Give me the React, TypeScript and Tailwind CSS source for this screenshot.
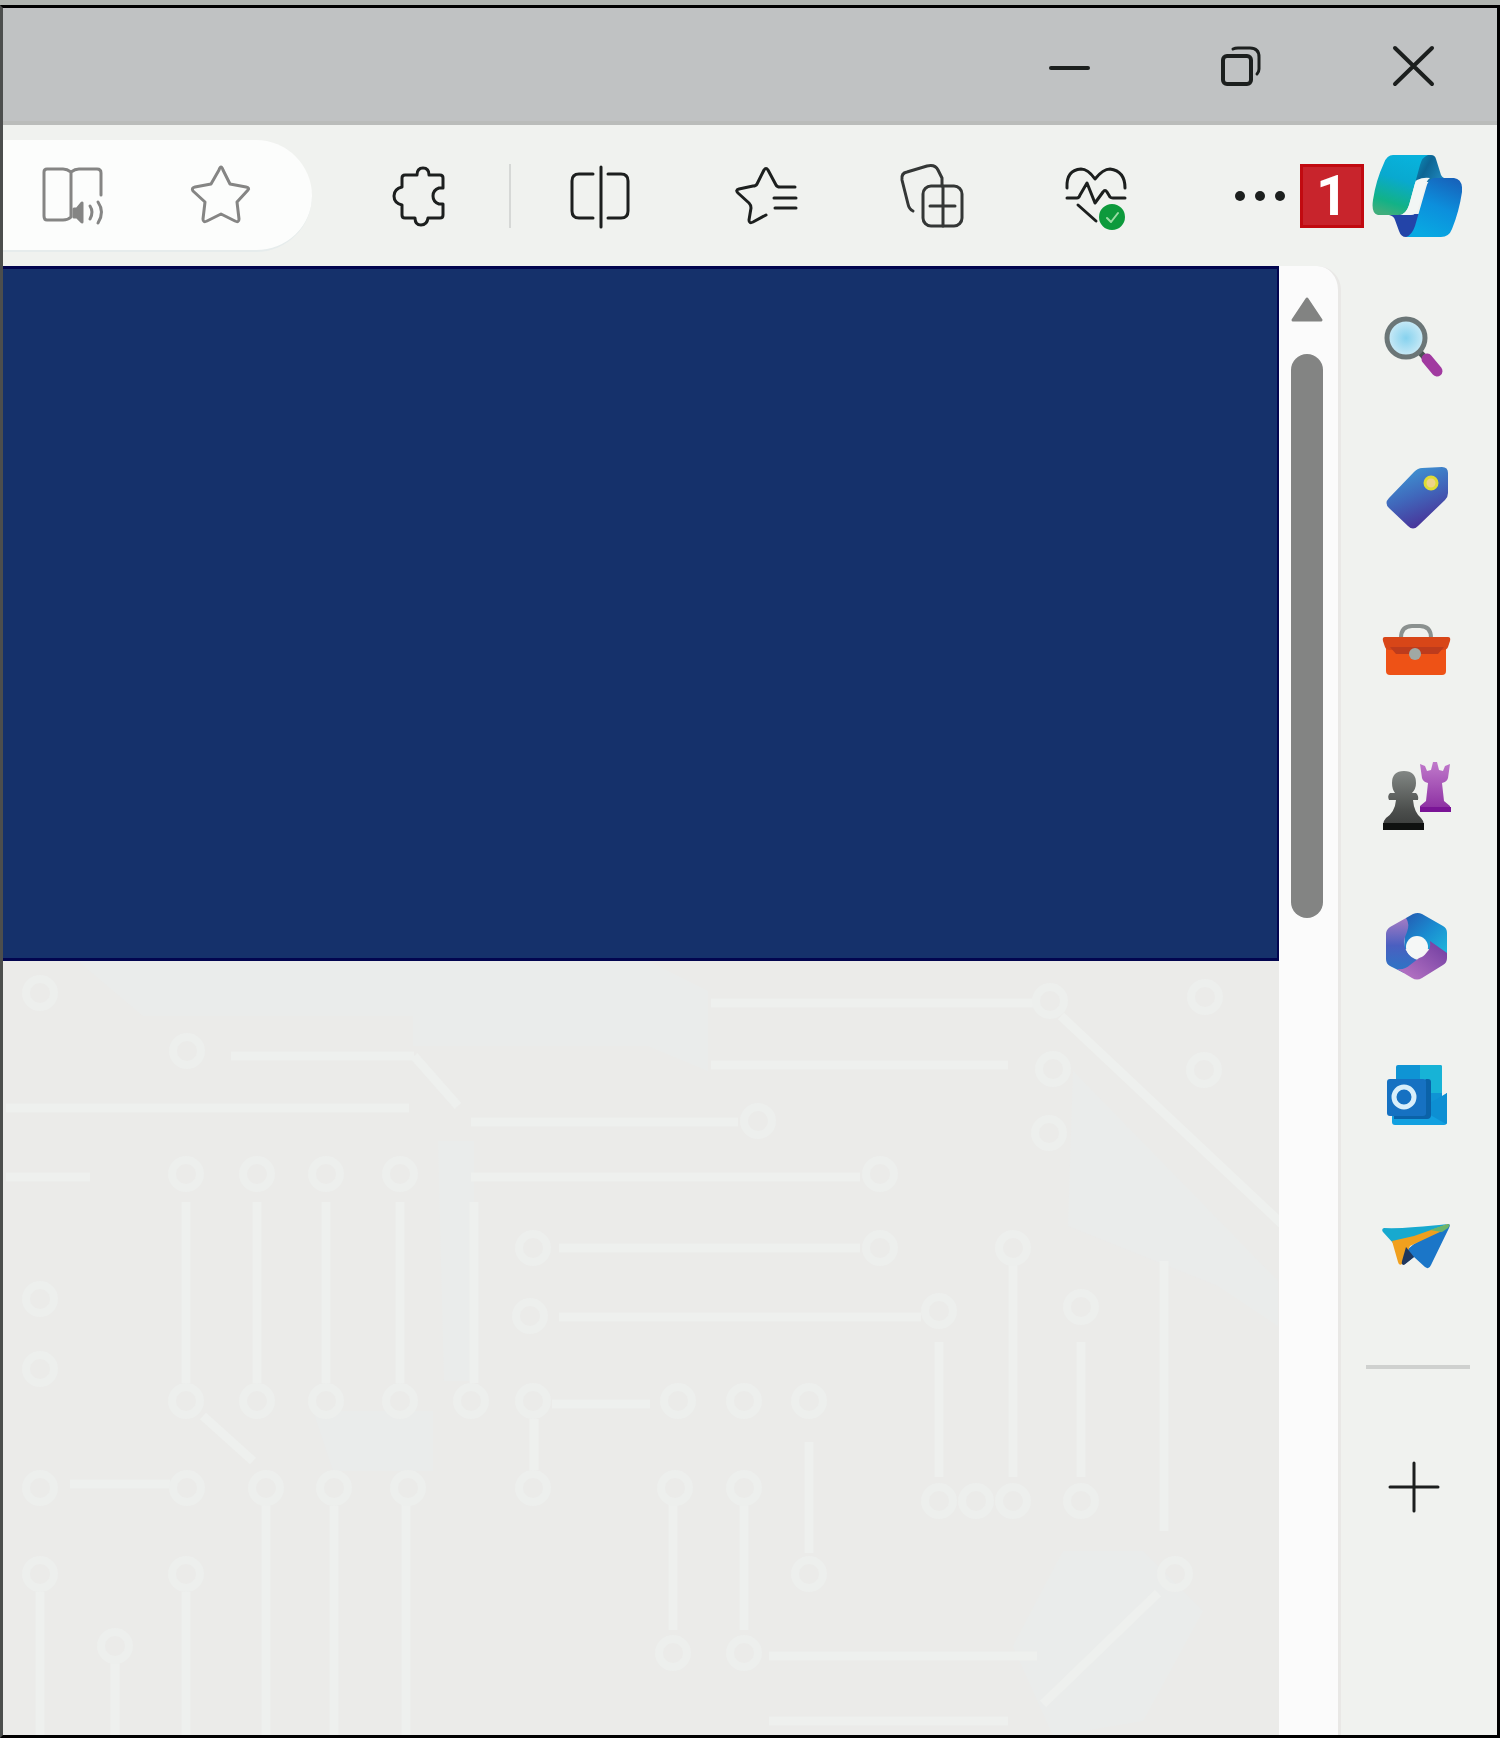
import type { ReactNode } from "react";

type IconProps = { children: ReactNode; className?: string };

function Icon({ children, className = "text-[#1c1f1e]" }: IconProps) {
  return (
    <svg
      viewBox="0 0 72 72"
      className={`w-18 h-18 ${className}`}
      fill="none"
      stroke="currentColor"
      strokeWidth="3"
      strokeLinecap="round"
      strokeLinejoin="round"
      aria-hidden="true"
    >
      {children}
    </svg>
  );
}

function IconButton({ label, children }: { label: string; children: ReactNode }) {
  return (
    <button type="button" aria-label={label} className="shrink-0 cursor-pointer">
      {children}
    </button>
  );
}

function TitleBar() {
  return (
    <header className="h-[117px] flex items-center justify-end gap-25 pr-12 bg-[#c0c2c3] border-b-4 border-[#babcba]">
      <IconButton label="Minimize">
        <Icon>
          <path d="M18 39h37" strokeWidth="4" />
        </Icon>
      </IconButton>
      <IconButton label="Restore">
        <Icon>
          <rect x="18" y="27" width="28" height="28" rx="4" strokeWidth="4" />
          <path d="M28 20q2-1 5-1h12q9 0 9 9v12q0 3-2 5" />
        </Icon>
      </IconButton>
      <IconButton label="Close">
        <Icon>
          <path d="M18 19l37 36M55 19L18 55" strokeWidth="4" />
        </Icon>
      </IconButton>
    </header>
  );
}

function CopilotLogo() {
  return (
    <svg viewBox="0 0 90 84" className="w-[90px] h-21" aria-hidden="true">
      <defs>
        <linearGradient id="cp-left" x1="0.6" y1="0" x2="0.3" y2="1">
          <stop offset="0" stopColor="#08b2dc" />
          <stop offset="0.4" stopColor="#09a9cf" />
          <stop offset="0.8" stopColor="#12b287" />
          <stop offset="1" stopColor="#3fae7c" />
        </linearGradient>
        <linearGradient id="cp-right" x1="0.8" y1="0" x2="0.4" y2="1">
          <stop offset="0" stopColor="#1763bb" />
          <stop offset="0.5" stopColor="#0c8fdc" />
          <stop offset="1" stopColor="#08a9e2" />
        </linearGradient>
        <linearGradient id="cp-fold" x1="0" y1="0" x2="1" y2="0.4">
          <stop offset="0" stopColor="#0a9dc8" />
          <stop offset="0.5" stopColor="#0d6594" />
          <stop offset="1" stopColor="#1f86bb" />
        </linearGradient>
      </defs>
      <path d="M48 1h11q4 0 5 4l5 16q2 4 8 4L56 28l-16-2z" fill="url(#cp-fold)" />
      <path d="M17 60h30l-5 23H34q-5 0-7-6l-4-11q-1-4-6-5z" fill="#2344a8" />
      <path
        d="M21 1h35q-6 2-8 10L38 48q-3 13-12 13H6Q-1 60 1 46 4 26 12 9q3-8 9-8z"
        fill="url(#cp-left)"
      />
      <path
        d="M62 24h20q9 1 8 14-3 20-10 37-3 8-11 8H34q6-2 9-11l11-38q2-9 8-10z"
        fill="url(#cp-right)"
      />
      <path d="M45 26q6-3 13-2-4 3-6 11l-6 20q-2 6-7 6H28q6-1 9-10l5-18q1-5 3-7z" fill="#f2f6f5" />
    </svg>
  );
}

function Toolbar() {
  return (
    <div className="h-[141px] flex items-center pr-[35px] bg-[#f0f2ef]">
      <div className="flex-1 h-28 flex items-center gap-[75px] pl-[35px] mr-18 bg-[#fcfdfc] rounded-r-full border-b-2 border-[#e6ecec]">
        <IconButton label="Read aloud">
          <Icon className="text-[#858584]">
            <path d="M33 13q-4-3-8-3H9q-3 0-3 3v44q0 4 3 4h16q5 0 8-3V13q4-3 8-3h18q4 0 4 4v22" />
            <path d="M36 50h3l5-6v19l-5-5h-3z" fill="currentColor" />
            <path d="M52 47q4 6 0 13M60 43q7 10 0 21" />
          </Icon>
        </IconButton>
        <IconButton label="Add to favorites">
          <Icon className="text-[#858584]">
            <path d="M36 8q1 0 2 3l7 14 16 3q4 1 2 3L52 43l2 17q0 4-4 2l-14-7-14 7q-4 2-4-2l2-17L8 32q-2-3 2-4l16-3 8-14q1-3 2-3z" />
          </Icon>
        </IconButton>
      </div>

      <nav aria-label="Browser tools" className="flex items-center">
        <IconButton label="Extensions">
          <Icon>
            <path d="M33 15q0-7 6-7t6 7h11q3 0 3 3v10h-4q-6 2-6 8t6 8h4v11q0 3-3 3H44q-1 7-7 7t-6-7H21q-3 0-3-3V45q-8-2-8-9t8-9v-9q0-3 3-3z" />
          </Icon>
        </IconButton>
        <span className="w-0.5 h-16 mx-[53px] bg-[#d6d8d6]" />
        <div className="flex items-center gap-[93px]">
          <IconButton label="Split screen">
            <Icon>
              <path d="M37 7v60M29 14H15q-7 0-7 7v30q0 7 7 7h14M44 14h13q7 0 7 7v30q0 7-7 7H44" />
            </Icon>
          </IconButton>
          <IconButton label="Favorites">
            <Icon>
              <path d="M66 27H51q-3 0-4-2l-8-15q-2-3-4 0l-7 14q-1 2-4 2l-14 3q-4 1-1 4l11 10q2 2 2 5l-2 12q0 4 4 2l13-7M45 38h22M46 48h21" />
            </Icon>
          </IconButton>
          <IconButton label="Collections">
            <Icon className="text-[#343736]">
              <rect x="29" y="26" width="39" height="40" rx="8" />
              <path d="M49 26v40M36 46h25M19 51q-4-2-5-7L8 20q-1-7 5-8l20-6q8-2 11 4l4 8v8" />
            </Icon>
          </IconButton>
          <IconButton label="Browser essentials">
            <Icon>
              <path d="M8 28Q7 10 22 9q7 0 14 10Q44 9 51 9q15 2 15 19M8 38h10q2 0 3-3l7-12 8 20 8-11q2-3 4 0l3 5q1 1 3 1h12M19 45l18 16" />
              <circle cx="53" cy="57" r="12" fill="#0d9a3c" stroke="#0d9a3c" strokeWidth="2" />
              <path d="M48 58l4 4 7-9" stroke="#9adca4" strokeWidth="2" />
            </Icon>
          </IconButton>
          <IconButton label="Settings and more">
            <Icon>
              <g fill="currentColor" stroke="none">
                <circle cx="16" cy="36" r="5" />
                <circle cx="36" cy="36" r="5" />
                <circle cx="56" cy="36" r="5" />
              </g>
            </Icon>
          </IconButton>
        </div>
        <span className="w-16 h-16 ml-1 mr-2 flex items-center justify-center bg-[#c8242c] border-3 border-[#c10a10] font-[family-name:Roboto,sans-serif] text-[56px] leading-none font-bold text-white">
          1
        </span>
        <IconButton label="Copilot">
          <CopilotLogo />
        </IconButton>
      </nav>
    </div>
  );
}

// [x1, y1, x2, y2]
const TRACES = [
  [228, 95, 411, 95], [3, 147, 406, 147], [468, 161, 735, 161], [3, 216, 87, 216],
  [468, 216, 857, 216], [556, 287, 857, 287], [556, 356, 918, 356], [549, 443, 647, 443],
  [67, 523, 167, 523], [708, 42, 1034, 42], [708, 104, 1005, 104], [766, 695, 1034, 695],
  [766, 760, 1005, 760], [183, 241, 183, 422], [254, 241, 254, 422], [323, 241, 323, 422],
  [397, 241, 397, 422], [471, 241, 471, 422], [531, 458, 531, 509], [263, 539, 263, 774],
  [331, 545, 331, 774], [403, 539, 403, 774], [37, 631, 37, 774], [183, 631, 183, 774],
  [112, 702, 112, 774], [936, 381, 936, 516], [1010, 300, 1010, 516], [1078, 381, 1078, 516],
  [1161, 300, 1161, 570], [806, 481, 806, 592], [670, 542, 670, 669], [741, 542, 741, 669],
  [1058, 55, 1280, 264], [1155, 632, 1040, 743], [411, 95, 455, 145], [200, 455, 250, 500],
];

const PADS = [
  [37, 32], [184, 90], [755, 160], [877, 213], [530, 287], [877, 287], [527, 355],
  [183, 213], [254, 213], [323, 213], [397, 213], [183, 440], [254, 440], [323, 440],
  [397, 440], [468, 440], [530, 440], [37, 527], [184, 527], [263, 527], [331, 527],
  [405, 527], [530, 527], [672, 527], [741, 527], [37, 613], [183, 613], [112, 685],
  [37, 338], [37, 408], [1047, 40], [1201, 109], [1050, 108], [1046, 172], [1202, 36],
  [936, 350], [1010, 287], [1078, 346], [936, 540], [973, 540], [1010, 540], [1078, 540],
  [1172, 613], [806, 613], [675, 440], [741, 440], [806, 440], [670, 692], [741, 692],
];

function CircuitBackdrop() {
  return (
    <svg
      viewBox="0 0 1280 774"
      preserveAspectRatio="xMinYMin slice"
      className="w-full flex-1 min-h-0 bg-[#ebebe9]"
      fill="none"
      aria-hidden="true"
    >
      <g fill="#eaeceb">
        <path d="M75 0h570l60 30v80l-60-25H410V55H140z" />
        <path d="M1070 110l205 210v45l-60-40-150-60z" />
        <path d="M1060 590h80l60 60-60 110-90 15-40-90z" />
        <path d="M435 180h36v240h-30zM310 450h120v60H330z" />
      </g>
      <g stroke="#eef0ee" strokeWidth="9">
        {TRACES.map(([x1, y1, x2, y2]) => (
          <line key={`${x1}-${y1}-${y2}`} x1={x1} y1={y1} x2={x2} y2={y2} />
        ))}
      </g>
      <g stroke="#edefed" strokeWidth="8">
        {PADS.map(([cx, cy]) => (
          <circle key={`${cx}-${cy}`} cx={cx} cy={cy} r="14" />
        ))}
      </g>
    </svg>
  );
}

function Scrollbar() {
  return (
    <div className="w-[62px] shrink-0 flex flex-col items-center gap-8 pt-[31px] pr-1 bg-[#fbfbfb] border-r-3 border-[#e9e8e6] rounded-tr-3xl">
      <button type="button" aria-label="Scroll up">
        <svg viewBox="0 0 32 25" className="w-8 h-[25px]" aria-hidden="true">
          <path d="M16 2l14 21H2z" fill="#828382" stroke="#828382" strokeWidth="3" strokeLinejoin="round" />
        </svg>
      </button>
      <div className="w-8 h-141 rounded-full bg-[#838483]" />
    </div>
  );
}

function SearchIcon() {
  return (
    <Icon>
      <defs>
        <radialGradient id="lens">
          <stop offset="0" stopColor="#86d2ee" />
          <stop offset="1" stopColor="#cdebf7" />
        </radialGradient>
      </defs>
      <path d="M36 39l8 9" stroke="#4a5455" strokeWidth="6" />
      <path d="M45 48l10 12" stroke="#a13aa0" strokeWidth="11" />
      <circle cx="24" cy="27" r="19" fill="url(#lens)" stroke="#6b7677" strokeWidth="5" />
    </Icon>
  );
}

function TagIcon() {
  return (
    <Icon>
      <defs>
        <linearGradient id="tag" x1="0.2" y1="0" x2="0.6" y2="1">
          <stop offset="0" stopColor="#3d9bd6" />
          <stop offset="0.5" stopColor="#4067bb" />
          <stop offset="1" stopColor="#4a2f96" />
        </linearGradient>
      </defs>
      <path
        d="M40 7l20-1q6 0 6 6v20q0 4-3 7L36 65q-5 5-10 0L7 47q-5-5 0-10L32 11q4-4 8-4z"
        fill="url(#tag)"
        stroke="none"
      />
      <circle cx="49" cy="22" r="6" fill="#efd488" stroke="#dfdc35" strokeWidth="3" />
    </Icon>
  );
}

function ToolboxIcon() {
  return (
    <Icon>
      <path d="M19 27q0-12 11-12h8q11 0 11 12" stroke="#8b918f" strokeWidth="4" />
      <path d="M4 36h60v24q0 4-4 4H8q-4 0-4-4z" fill="#ee5216" stroke="none" />
      <path d="M3 26h63q3 0 2 4l-2 6q-1 3-5 3H8q-4 0-5-3l-2-6q-1-4 2-4z" fill="#d84618" stroke="none" />
      <path d="M8 36h54l-6 7H14z" fill="#bd3b1c" stroke="none" />
      <circle cx="33" cy="43" r="6" fill="#a0a9a4" stroke="none" />
    </Icon>
  );
}

function ChessIcon() {
  return (
    <Icon>
      <defs>
        <linearGradient id="pawn" x1="0" y1="0" x2="0" y2="1">
          <stop offset="0" stopColor="#828784" />
          <stop offset="0.7" stopColor="#4d504e" />
          <stop offset="1" stopColor="#3d3f3e" />
        </linearGradient>
        <linearGradient id="rook" x1="0" y1="0" x2="0" y2="1">
          <stop offset="0" stopColor="#c07acb" />
          <stop offset="1" stopColor="#8a2ca0" />
        </linearGradient>
      </defs>
      <g stroke="none">
        <path
          d="M38 3l5 2 2 5 4-1 2-8h4l2 8 4 1 2-5 5-2-2 14q-1 4-6 5l2 18 6 5v5H38v-5l6-5 2-18q-5-1-6-5z"
          fill="url(#rook)"
        />
        <path d="M38 46h31v5H38z" fill="#7a1496" />
        <path
          d="M22 10q12 0 12 12 0 6-4 10h4q3 3 2 7h-5q1 12 8 18 3 3 3 7H1q0-4 3-7 9-6 10-18H7q-2-4 1-7h5q-3-4-3-10 0-12 12-12z"
          fill="url(#pawn)"
        />
        <path d="M1 62h41v7H1z" fill="#0f1110" />
      </g>
    </Icon>
  );
}

function OfficeIcon() {
  return (
    <Icon>
      <defs>
        <linearGradient id="of-a" x1="0" y1="0" x2="1" y2="1">
          <stop offset="0" stopColor="#2558b0" />
          <stop offset="0.5" stopColor="#1a8bd0" />
          <stop offset="1" stopColor="#1fb9dc" />
        </linearGradient>
        <linearGradient id="of-b" x1="0" y1="0" x2="0" y2="1">
          <stop offset="0" stopColor="#a57cc4" />
          <stop offset="0.5" stopColor="#4a5fc0" />
          <stop offset="1" stopColor="#2a77c6" />
        </linearGradient>
        <linearGradient id="of-c" x1="0" y1="1" x2="1" y2="0">
          <stop offset="0" stopColor="#bd79c7" />
          <stop offset="1" stopColor="#6d3b9f" />
        </linearGradient>
      </defs>
      <g stroke="none">
        <path d="M24 7l7-4q5-2 9 0l21 12q4 2 4 7v22L46 38H22z" fill="url(#of-a)" />
        <path d="M24 7q4 6 1 14-5 10-1 18 4 8 12 10L22 62 8 55q-4-2-4-7V23q0-4 4-7z" fill="url(#of-b)" />
        <path d="M65 42v5q0 5-4 7L40 67q-5 3-10 0l-15-9q8 1 13-4l17-13q4-3 3-11z" fill="url(#of-c)" />
        <circle cx="35" cy="36" r="11" fill="#f5f7f6" />
      </g>
    </Icon>
  );
}

function OutlookIcon() {
  return (
    <Icon>
      <g stroke="none">
        <rect x="14" y="4" width="46" height="42" rx="2" fill="#0f94d4" />
        <path d="M38 4h20q2 0 2 2v26H38z" fill="#17b3d6" />
        <path d="M14 18h24v14H14z" fill="#1478c4" />
        <path d="M65 32v29q0 3-3 3H13q-3 0-3-3V50l34-2z" fill="#12a0e0" />
        <path d="M38 48l27-16v29q0 2-1 2z" fill="#0d8fd3" />
        <path d="M44 18h2q3 0 3 3v33q0 4-4 4H12v-5z" fill="#0b62a8" />
        <rect x="5" y="18" width="39" height="37" rx="3" fill="#1671c2" />
      </g>
      <circle cx="22" cy="36" r="10" stroke="#d8eefa" strokeWidth="5" />
    </Icon>
  );
}

function SendIcon() {
  return (
    <Icon>
      <g stroke="none">
        <path d="M2 17q20 1 64-4L32 28l-21 4-10-11q-2-3 1-4z" fill="#17a9cf" />
        <path d="M66 13q3 0 1 4L49 54q-2 5-6 2L32 46l-9 7-3-10 12-10z" fill="#1b76c8" />
        <path d="M10 30l22-5 34-12-6 7-32 15-8 18q-3 2-4-2z" fill="#f0a01e" />
        <path d="M24 36l8 10-10 8q-3 0-2-4z" fill="#20375d" />
        <path d="M48 19l18-6q3 0 0 4l-6 4z" fill="#6bb56a" />
      </g>
    </Icon>
  );
}

const SIDEBAR_APPS = [
  { label: "Search", icon: <SearchIcon /> },
  { label: "Shopping", icon: <TagIcon /> },
  { label: "Tools", icon: <ToolboxIcon /> },
  { label: "Games", icon: <ChessIcon /> },
  { label: "Microsoft 365", icon: <OfficeIcon /> },
  { label: "Outlook", icon: <OutlookIcon /> },
  { label: "Drop", icon: <SendIcon /> },
];

function Sidebar() {
  return (
    <aside className="w-39 shrink-0 flex flex-col items-center pt-[45px] pr-0.5 bg-[#f0f2ef]">
      <div className="flex flex-col gap-[78px]">
        {SIDEBAR_APPS.map((app) => (
          <IconButton key={app.label} label={app.label}>
            {app.icon}
          </IconButton>
        ))}
      </div>
      <hr className="w-26 my-[82px] border-t-4 border-[#cfd1cf]" />
      <IconButton label="Customize">
        <Icon>
          <path d="M32 12v48M8 36h48" />
        </Icon>
      </IconButton>
    </aside>
  );
}

export default function App() {
  return (
    <div className="min-h-screen flex flex-col border-t-5 border-[#b0b4b0]">
      <div className="flex-1 flex flex-col border-3 border-black border-l-[#4c4e4d]">
        <TitleBar />
        <Toolbar />
        <div className="flex-1 flex bg-[#f0f2ef]">
          <main className="flex-1 flex flex-col">
            <div className="h-[695px] bg-[#15316b] border-y-3 border-r-2 border-[#02054f]" />
            <CircuitBackdrop />
          </main>
          <Scrollbar />
          <Sidebar />
        </div>
      </div>
    </div>
  );
}
